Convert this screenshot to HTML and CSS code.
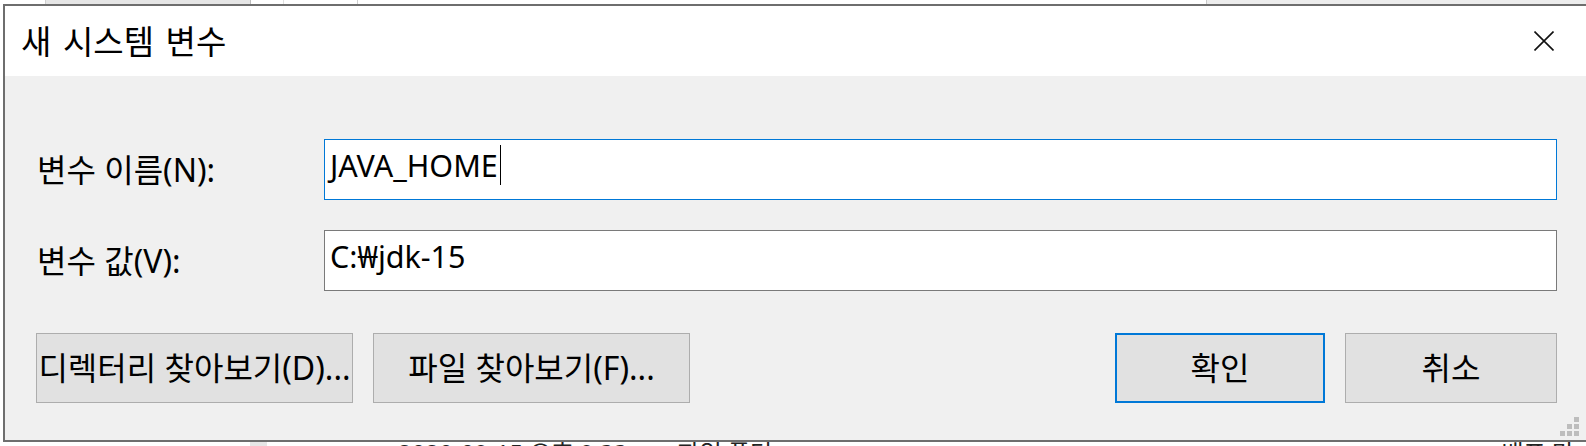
FILE: index.html
```html
<!DOCTYPE html>
<html lang="ko">
<head>
  <meta charset="UTF-8">
  <title>새 시스템 변수</title>
  <link rel="stylesheet" href="styles.css">
</head>
<body>
  <div class="screen">
    <div class="strip strip-top">
      <span class="tab"></span>
      <span class="gap-a"></span>
      <span class="gap-b"></span>
      <span class="gap-c"></span>
      <span class="tail"></span>
    </div>

    <div class="dialog">
      <div class="titlebar">
        <span class="title">새 시스템 변수</span>
        <svg class="close" width="20" height="20" viewBox="0 0 20 20">
          <path d="M0.5 0.5L19.5 19.5M19.5 0.5L0.5 19.5" stroke="#111" stroke-width="1.6" fill="none"/>
        </svg>
      </div>

      <div class="content">
        <div class="form">
          <label class="label">변수 이름(N):</label>
          <div class="field focused"><span>JAVA_HOME</span><span class="caret"></span></div>
          <label class="label">변수 값(V):</label>
          <div class="field"><span>C:₩jdk-15</span></div>
        </div>

        <div class="actions">
          <div class="group">
            <button class="btn wide">디렉터리 찾아보기(D)...</button>
            <button class="btn wide">파일 찾아보기(F)...</button>
          </div>
          <div class="group">
            <button class="btn small default">확인</button>
            <button class="btn small cancel">취소</button>
          </div>
        </div>

        <div class="grip">
          <i></i><i></i><i class="on"></i>
          <i></i><i class="on"></i><i class="on"></i>
          <i class="on"></i><i class="on"></i><i class="on"></i>
        </div>
      </div>
    </div>

    <div class="strip strip-bottom">
      <span class="shade"></span>
      <span class="peek date">2020-09-15 오후 9:33</span>
      <span class="peek kind">파일 폴더</span>
      <span class="peek end">배포 만</span>
    </div>
  </div>
</body>
</html>
```

FILE: styles.css
```css
* {
  box-sizing: border-box;
}

body {
  margin: 0;
  background: #ffffff;
  font-family: "Noto Sans", "Noto Sans CJK KR", sans-serif;
  color: #000;
}

.screen {
  width: 1586px;
  height: 446px;
  overflow: hidden;
  display: flex;
  flex-direction: column;
}

/* bits of the window behind the dialog */
.strip {
  display: flex;
  overflow: hidden;
  flex-shrink: 0;
}

.strip-top {
  height: 4px;
}

.strip-top .tab {
  margin-left: 45px;
  width: 206px;
  background: #e6e6e6;
  border-left: 1px solid #cfcfcf;
  border-right: 1px solid #bdbdbd;
}

.strip-top .gap-a {
  width: 33px;
  border-right: 1px solid #e0e0e0;
}

.strip-top .gap-b {
  width: 74px;
  border-right: 1px solid #cfcfcf;
}

.strip-top .gap-c {
  width: 849px;
  border-right: 1px solid #c8c8c8;
}

.strip-top .tail {
  flex: 1;
  background: #ededed;
}

.strip-bottom {
  height: 4px;
  align-items: flex-start;
}

.strip-bottom .shade {
  margin-left: 250px;
  width: 17px;
  height: 4px;
  background: #e6e6e6;
}

.strip-bottom .peek {
  font-size: 24px;
  line-height: 24px;
  margin-top: -1px;
  white-space: nowrap;
  flex-shrink: 0;
  color: #222;
}

.strip-bottom .date {
  margin-left: 131px;
}

.strip-bottom .kind {
  margin-left: 50px;
}

.strip-bottom .end {
  margin-left: auto;
  margin-right: 12px;
}

/* dialog */
.dialog {
  margin-left: 3px;
  height: 438px;
  flex-shrink: 0;
  border: 2px solid #6e6e6e;
  border-right: none;
  display: flex;
  flex-direction: column;
}

.titlebar {
  height: 70px;
  background: #fff;
  display: flex;
  align-items: center;
  justify-content: space-between;
  padding: 0 32px 0 16px;
}

.title {
  font-size: 33px;
  line-height: 1;
  word-spacing: 3px;
}

.close {
  display: block;
}

.content {
  position: relative;
  flex: 1;
  background: #f0f0f0;
  padding: 63px 29px 0 31px;
}

.form {
  display: grid;
  grid-template-columns: 288px 1fr;
  grid-auto-rows: 61px;
  row-gap: 30px;
}

.label {
  align-self: center;
  font-size: 32px;
  line-height: 1;
  padding-left: 1px;
}

.field {
  background: #fff;
  border: 1px solid #7a7a7a;
  padding: 4px 0 0 5px;
  font-size: 30.5px;
  line-height: 42px;
  display: flex;
  align-items: center;
  height: 61px;
  align-self: start;
  white-space: nowrap;
}

.field > span {
  align-self: flex-start;
}

.field.focused {
  border-color: #0078d7;
}

.caret {
  display: inline-block;
  width: 1px;
  height: 40px;
  margin-top: 1px;
  margin-left: 2px;
  background: #000;
}

.actions {
  margin-top: 42px;
  display: flex;
  justify-content: space-between;
}

.group {
  display: flex;
  gap: 20px;
}

.btn {
  height: 70px;
  padding: 0;
  margin: 0;
  background: #e1e1e1;
  border: 1px solid #adadad;
  border-radius: 0;
  font-family: inherit;
  font-size: 32px;
  line-height: 1;
  color: #000;
  white-space: nowrap;
  display: flex;
  align-items: center;
  justify-content: center;
}

.btn.wide {
  width: 317px;
}

.btn.small {
  width: 210px;
}

.btn.cancel {
  width: 212px;
}

.btn.default {
  border: 2px solid #0078d7;
}

.grip {
  position: absolute;
  right: 7px;
  bottom: 4px;
  display: grid;
  grid-template-columns: repeat(3, 5px);
  grid-auto-rows: 5px;
  gap: 2px;
}

.grip i.on {
  background: #bdbdbd;
}
```
